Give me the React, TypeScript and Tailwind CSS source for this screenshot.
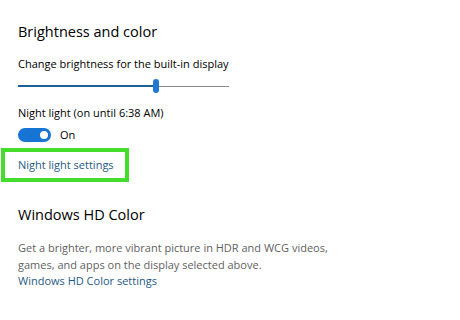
import React from "react";

const App = () => {
  return (
    <div
      className="w-[460px] h-[320px] bg-white overflow-hidden text-black"
      style={{ fontFamily: '"Open Sans", "Noto Sans", sans-serif' }}
    >
      <div className="pt-[20px]">
        <h2 className="pl-[18px] text-[14.5px] leading-[24px]">Brightness and color</h2>

        <p className="pl-[18px] mt-[12px] text-[11px] leading-[16px]">
          Change brightness for the built-in display
        </p>

        <div className="ml-[18px] mt-[6px] w-[211px] h-[16px] flex items-center relative">
          <div className="h-[2px] w-[137px] bg-[#1d5f97]" />
          <div className="h-[1px] flex-1 bg-[#8a8a8a]" />
          <div className="absolute left-[135px] top-[1px] w-[6px] h-[14px] rounded-[3px] bg-[#1f78d1]" />
        </div>

        <p className="pl-[18px] mt-[11px] text-[11px] leading-[16px]">
          Night light (on until 6:38 AM)
        </p>

        <div className="pl-[18px] mt-[6px] flex items-center gap-[9px]">
          <div className="w-[33px] h-[14px] rounded-full bg-[#1574d4] flex items-center justify-end pr-[3px]">
            <div className="w-[8px] h-[8px] rounded-full bg-white" />
          </div>
          <span className="text-[11px] leading-[16px]">On</span>
        </div>

        <div className="ml-[1px] mt-[5px] w-[128px] h-[34px] border-[4px] border-[#44dd2c] flex items-center pl-[13px]">
          <span className="text-[11px] leading-[16px] text-[#1f5a86]">Night light settings</span>
        </div>

        <h2 className="pl-[18px] mt-[21px] text-[14.5px] leading-[24px]">Windows HD Color</h2>

        <p className="pl-[18px] mt-[12px] text-[11px] leading-[17px] text-[#5f5f5f]">
          Get a brighter, more vibrant picture in HDR and WCG videos,
          <br />
          games, and apps on the display selected above.
        </p>

        <p className="pl-[18px] text-[11px] leading-[16px] text-[#1f5a86]">
          Windows HD Color settings
        </p>
      </div>
    </div>
  );
};

export default App;
